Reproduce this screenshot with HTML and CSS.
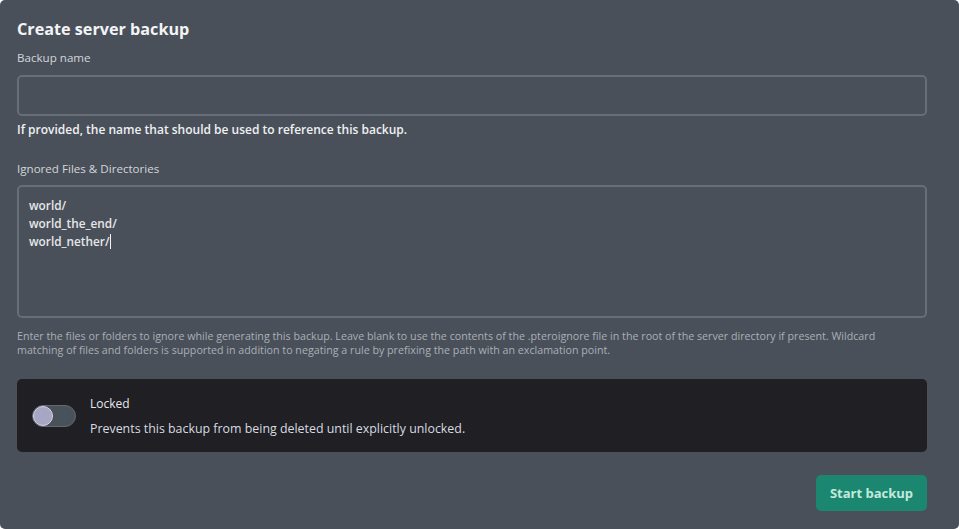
FILE: index.html
```html
<!DOCTYPE html>
<html lang="en">
<head>
<meta charset="utf-8">
<title>Create server backup</title>
<link rel="stylesheet" href="styles.css">
</head>
<body>
<div class="modal">
  <h2 class="title">Create server backup</h2>

  <div class="field">
    <label class="label" for="name">Backup name</label>
    <input class="input" id="name" type="text">
    <p class="hint strong">If provided, the name that should be used to reference this backup.</p>
  </div>

  <div class="field field-ignored">
    <label class="label" for="ignored">Ignored Files &amp; Directories</label>
    <div class="textarea" id="ignored">world/<br>world_the_end/<br>world_nether/<span class="caret"></span></div>
    <p class="hint small">Enter the files or folders to ignore while generating this backup. Leave blank to use the contents of the .pteroignore file in the root of the server directory if present. Wildcard matching of files and folders is supported in addition to negating a rule by prefixing the path with an exclamation point.</p>
  </div>

  <div class="lock-box">
    <span class="switch"><span class="knob"></span></span>
    <div class="lock-text">
      <div class="lock-title">Locked</div>
      <div class="lock-desc">Prevents this backup from being deleted until explicitly unlocked.</div>
    </div>
  </div>

  <div class="actions">
    <button class="btn" type="button">Start backup</button>
  </div>
</div>
</body>
</html>
```

FILE: styles.css
```css
html, body {
  margin: 0;
  padding: 0;
  background: #ffffff;
}

body {
  font-family: "Open Sans", "Noto Sans", sans-serif;
  color: #e5e7eb;
}

.modal {
  box-sizing: border-box;
  width: 959px;
  height: 529px;
  background: #4a5059;
  border-radius: 5px;
  padding: 17px 32px 0 17px;
}

.title {
  margin: 0;
  font-size: 16.2px;
  font-weight: 700;
  line-height: 24px;
  color: #f3f4f6;
}

.field {
  margin-top: 8px;
}

.field-ignored {
  margin-top: 22px;
}

.label {
  display: block;
  font-size: 11.6px;
  line-height: 17px;
  color: #d1d5db;
  margin-bottom: 9px;
}

.field-ignored .label {
  margin-bottom: 8px;
}

.input {
  display: block;
  box-sizing: border-box;
  width: 100%;
  height: 41px;
  margin: 0;
  background: #4a5059;
  border: 2px solid #676e78;
  border-radius: 5px;
  outline: none;
}

.textarea {
  box-sizing: border-box;
  width: 100%;
  height: 133px;
  background: #4a5059;
  border: 2px solid #676e78;
  border-radius: 5px;
  padding: 9px 10px;
  font-size: 11.8px;
  line-height: 18px;
  font-weight: 600;
  color: #e5e7eb;
}

.caret {
  display: inline-block;
  width: 1px;
  height: 15px;
  background: #f3f4f6;
  vertical-align: -3px;
}

.hint {
  margin: 0;
}

.hint.strong {
  margin-top: 5px;
  font-size: 12px;
  line-height: 17px;
  font-weight: 600;
  color: #eef0f3;
}

.hint.small {
  max-width: 870px;
  margin-top: 11px;
  font-size: 10.7px;
  line-height: 14px;
  color: #a9afb7;
}

.lock-box {
  display: flex;
  align-items: center;
  margin-top: 22px;
  height: 73px;
  box-sizing: border-box;
  background: #1f1f24;
  border-radius: 5px;
  padding: 0 15px;
  gap: 14px;
}

.switch {
  position: relative;
  flex: none;
  width: 44px;
  height: 22px;
  box-sizing: border-box;
  border-radius: 11px;
  background: #49515a;
  border: 1px solid #626a73;
}

.knob {
  position: absolute;
  left: 0;
  top: 0;
  width: 18px;
  height: 18px;
  border-radius: 50%;
  background: #a7a6c4;
  border: 1px solid #d6d6e4;
}

.lock-title {
  font-size: 12px;
  line-height: 17px;
  color: #e5e7eb;
}

.lock-desc {
  margin-top: 8px;
  font-size: 12.4px;
  line-height: 17px;
  color: #d8dbe0;
}

.actions {
  display: flex;
  justify-content: flex-end;
  margin-top: 23px;
}

.btn {
  height: 36px;
  width: 111px;
  border: none;
  border-radius: 5px;
  background: #1b8770;
  color: #c3e9dd;
  font-family: inherit;
  font-size: 13px;
  font-weight: 700;
  padding: 0;
}
```
